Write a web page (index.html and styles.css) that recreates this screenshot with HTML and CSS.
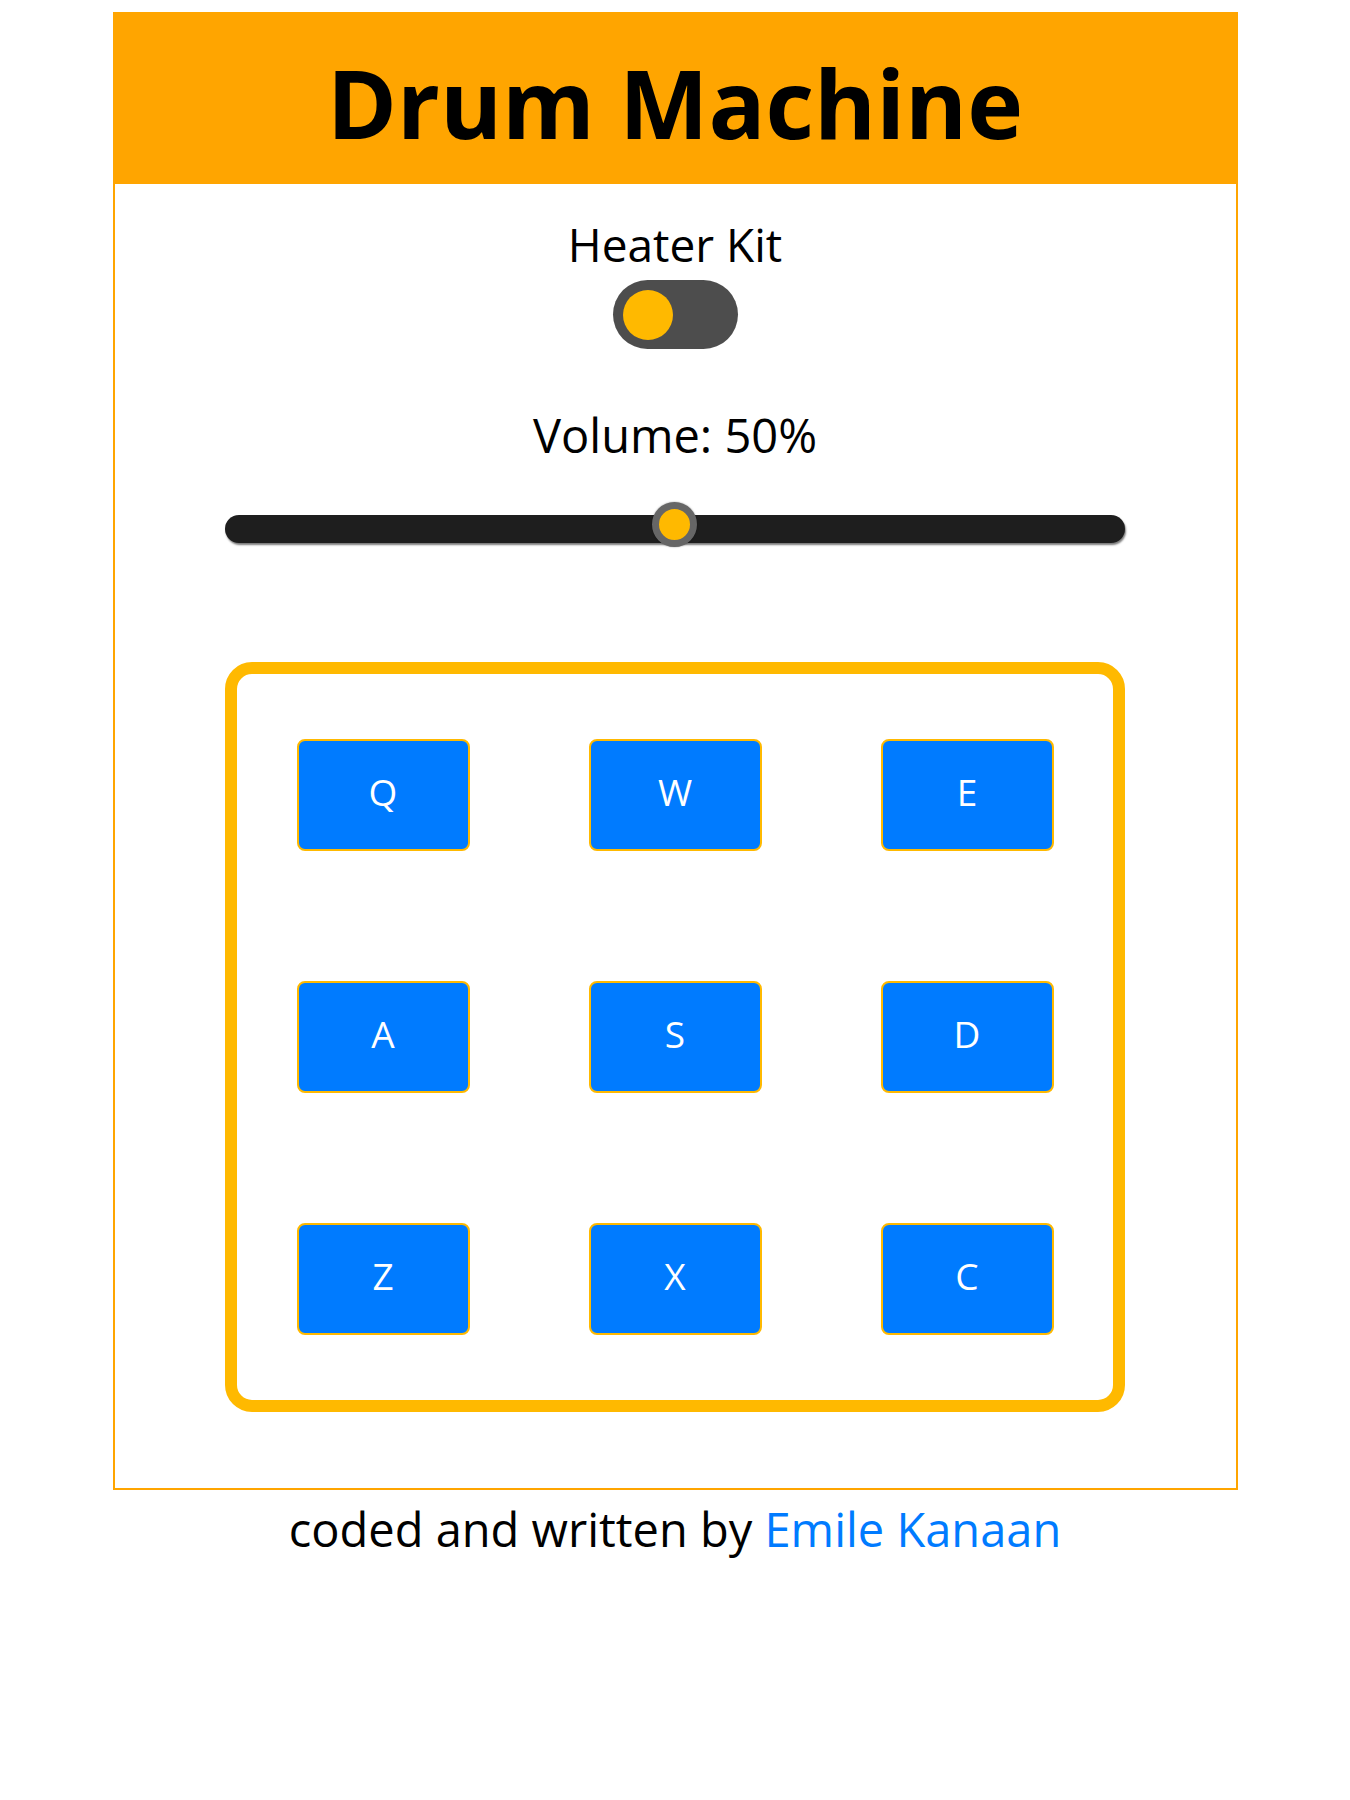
FILE: index.html
```html
<!DOCTYPE html>
<html lang="en">
<head>
<meta charset="utf-8">
<title>Drum Machine</title>
<link rel="stylesheet" href="styles.css">
</head>
<body>
  <div class="machine">
    <header class="banner">
      <h1 class="title">Drum Machine</h1>
    </header>
    <section class="controls">
      <p class="kit-name">Heater Kit</p>
      <div class="toggle"><span class="toggle-knob"></span></div>
      <p class="volume-label">Volume: 50%</p>
      <div class="slider">
        <div class="slider-track"></div>
        <div class="slider-thumb"></div>
      </div>
    </section>
    <section class="pad-bank">
      <div class="pad-cell"><button class="pad">Q</button></div>
      <div class="pad-cell"><button class="pad">W</button></div>
      <div class="pad-cell"><button class="pad">E</button></div>
      <div class="pad-cell"><button class="pad">A</button></div>
      <div class="pad-cell"><button class="pad">S</button></div>
      <div class="pad-cell"><button class="pad">D</button></div>
      <div class="pad-cell"><button class="pad">Z</button></div>
      <div class="pad-cell"><button class="pad">X</button></div>
      <div class="pad-cell"><button class="pad">C</button></div>
    </section>
  </div>
  <p class="credit">coded and written by <a class="credit-link" href="#">Emile Kanaan</a></p>
</body>
</html>
```

FILE: styles.css
```css
* {
  box-sizing: border-box;
}

body {
  margin: 0;
  background: #ffffff;
  color: #000000;
  font-family: "Open Sans", "Noto Sans", sans-serif;
}

.machine {
  width: 1125px;
  margin: 12px auto 0;
  border: 2px solid #ffa500;
  padding-bottom: 76px;
  display: flex;
  flex-direction: column;
  align-items: center;
}

.banner {
  width: 100%;
  height: 170px;
  padding-top: 9px;
  background: #ffa500;
  display: flex;
  align-items: center;
  justify-content: center;
}

.title {
  margin: 0;
  font-size: 94.5px;
  font-weight: 700;
  line-height: 1;
}

.controls {
  display: flex;
  flex-direction: column;
  align-items: center;
}

.kit-name {
  margin: 32px 0 0;
  font-size: 46px;
  line-height: 56px;
}

.toggle {
  margin-top: 8px;
  width: 125px;
  height: 69px;
  border-radius: 35px;
  background: #4d4d4d;
  display: flex;
  align-items: center;
  padding-left: 10px;
}

.toggle-knob {
  width: 50px;
  height: 50px;
  border-radius: 50%;
  background: #ffb900;
}

.volume-label {
  margin: 58px 0 0;
  font-size: 47px;
  line-height: 56px;
}

.slider {
  position: relative;
  margin-top: 39px;
  width: 900px;
  height: 45px;
  padding-top: 13px;
}

.slider-track {
  height: 28px;
  border-radius: 14px;
  background: #1e1e1e;
  box-shadow: 1px 2px 2px #7a7a7a;
}

.slider-thumb {
  position: absolute;
  top: 0;
  left: 427px;
  width: 45px;
  height: 45px;
  border-radius: 50%;
  background: #ffb900;
  border: 7.5px solid #666666;
  box-shadow: 0 0 2px rgba(0, 0, 0, 0.4);
}

.pad-bank {
  margin-top: 115px;
  width: 900px;
  height: 750px;
  border: 12px solid #ffb900;
  border-radius: 27px;
  display: grid;
  grid-template-columns: repeat(3, 1fr);
  grid-template-rows: repeat(3, 1fr);
}

.pad-cell {
  display: flex;
  align-items: center;
  justify-content: center;
}

.pad {
  width: 173px;
  height: 112px;
  border: 2px solid #ffb900;
  border-radius: 8px;
  background: #007bff;
  color: #ffffff;
  font-family: "Open Sans", "Noto Sans", sans-serif;
  font-size: 37px;
  line-height: 1;
  padding: 0 0 7px;
  cursor: pointer;
}

.credit {
  margin: 9px 0 0;
  text-align: center;
  font-size: 47px;
  line-height: 60px;
}

.credit-link {
  color: #007bff;
  text-decoration: none;
}
```
